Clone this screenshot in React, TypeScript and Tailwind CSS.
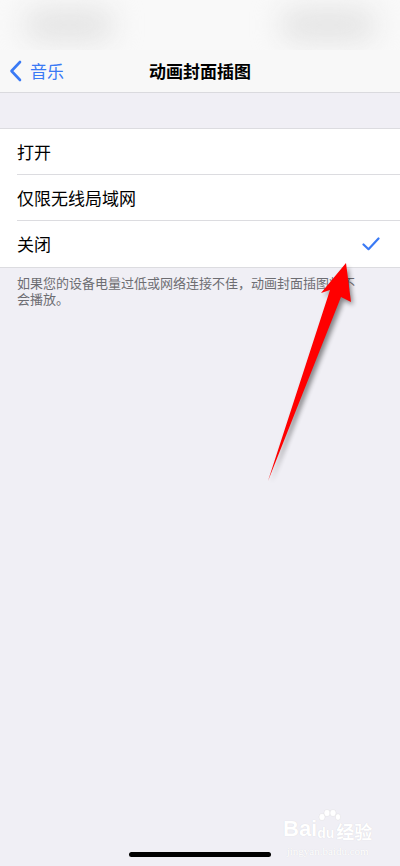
import React from "react";

const CJK = "'Noto Sans CJK SC', 'Noto Sans', sans-serif";

function Row({ label, checked, last }: { label: string; checked?: boolean; last?: boolean }) {
  return (
    <div className="flex h-[46px] items-stretch pl-[17px]">
      <div
        className={
          "flex flex-1 items-center justify-between pr-[20px] " +
          (last ? "" : "border-b border-[#dcdce0]")
        }
      >
        <span className="text-[17px] text-black">{label}</span>
        {checked && (
          <svg width="18" height="14" viewBox="0 0 18 14" fill="none">
            <path
              d="M1.5 7.5 L6.5 12.2 L16.5 1.5"
              stroke="#3a7af5"
              strokeWidth="2.2"
              strokeLinecap="round"
              strokeLinejoin="round"
            />
          </svg>
        )}
      </div>
    </div>
  );
}

export default function App() {
  return (
    <div
      className="relative h-[866px] w-[400px] overflow-hidden bg-[#f0eff5]"
      style={{ fontFamily: CJK }}
    >
      {/* status bar, smeared */}
      <div className="flex h-[50px] items-center justify-between overflow-hidden bg-[#f9f9f9] px-[24px]">
        <div className="h-[34px] w-[90px] rounded-full bg-[#e4e4e4] blur-[14px]" />
        <div className="h-[34px] w-[96px] rounded-full bg-[#e4e4e4] blur-[14px]" />
      </div>

      {/* navigation bar */}
      <div className="relative flex h-[43px] items-center border-b border-[#dadade] bg-[#f8f8f8]">
        <div className="flex items-center pl-[9px] text-[#3a7af5]">
          <svg width="13" height="22" viewBox="0 0 13 22" fill="none">
            <path
              d="M11 2 L2.5 11 L11 20"
              stroke="#3a7af5"
              strokeWidth="2.6"
              strokeLinecap="round"
              strokeLinejoin="round"
            />
          </svg>
          <span className="ml-[8px] text-[17px]">音乐</span>
        </div>
        <div className="absolute inset-0 flex items-center justify-center">
          <span className="text-[17px] font-semibold text-black">动画封面插图</span>
        </div>
      </div>

      {/* options */}
      <div className="mt-[35px] border-y border-[#dcdce0] bg-white">
        <Row label="打开" />
        <Row label="仅限无线局域网" />
        <Row label="关闭" checked last />
      </div>

      <p className="pl-[17px] pr-[40px] pt-[7px] text-[13px] leading-[16px] text-[#6d6d72]">
        如果您的设备电量过低或网络连接不佳，动画封面插图将不会播放。
      </p>

      {/* red annotation arrow */}
      <svg
        className="absolute left-0 top-0"
        width="400"
        height="866"
        viewBox="0 0 400 866"
      >
        <defs>
          <filter id="arrowShadow" x="-20%" y="-20%" width="140%" height="140%">
            <feGaussianBlur stdDeviation="2.5" />
          </filter>
        </defs>
        <polygon
          points="348,267 353,305 344,300 271,483 333,293 324,296"
          fill="#000"
          opacity="0.45"
          filter="url(#arrowShadow)"
        />
        <polygon
          points="346,263 351,302 341,297 268,481 330,290 321,293"
          fill="#ff0000"
        />
      </svg>

      {/* watermark */}
      <div className="absolute left-[283px] top-[812px] flex flex-col items-center text-white [text-shadow:0_0_1px_rgba(0,0,0,0.12)]">
        <div className="flex items-end" style={{ fontFamily: "'Liberation Sans', sans-serif" }}>
          <span className="text-[22px] font-bold leading-none">Bai</span>
          <span className="relative mt-[14px] text-[14px] font-bold leading-none">
            <svg className="absolute -top-[17px] left-[0px]" width="24" height="18" viewBox="0 0 24 18">
              <g fill="#fff" stroke="rgba(0,0,0,0.1)" strokeWidth="0.5">
                <ellipse cx="5" cy="8" rx="3" ry="3.5" />
                <ellipse cx="10" cy="4" rx="3" ry="3.5" />
                <ellipse cx="16" cy="4" rx="3" ry="3.5" />
                <ellipse cx="21" cy="8" rx="2.6" ry="3.2" />
              </g>
            </svg>
            du
          </span>
          <span className="ml-[2px] text-[18px] font-bold leading-none" style={{ fontFamily: CJK }}>
            经验
          </span>
        </div>
        <span className="mt-[6px] text-[11px] leading-none" style={{ fontFamily: "'Liberation Serif', serif" }}>
          jingyan.baidu.com
        </span>
      </div>

      {/* home indicator */}
      <div className="absolute bottom-[9px] left-[129px] h-[5px] w-[142px] rounded-full bg-black" />
    </div>
  );
}
